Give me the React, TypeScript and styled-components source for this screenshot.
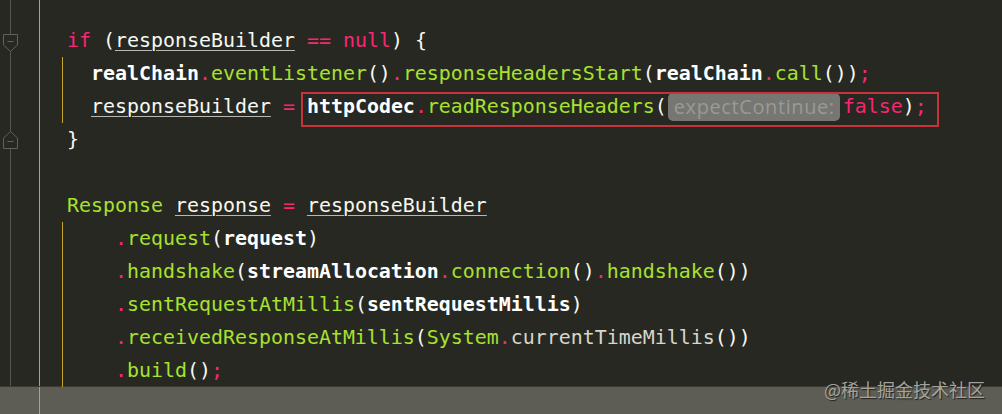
import React from 'react';
import styled, { createGlobalStyle } from 'styled-components';

const GlobalStyle = createGlobalStyle`
  html, body {
    margin: 0;
    padding: 0;
    background: #272822;
  }
`;

type Kind = 'plain' | 'kw' | 'op' | 'fn' | 'type' | 'var' | 'ul' | 'call';
type Token = [Kind, string];

const palette: Record<Kind, string> = {
  plain: '#f8f8f2',
  kw: '#f92672',
  op: '#f92672',
  fn: '#a6e22e',
  type: '#a6e22e',
  var: '#ffffff',
  ul: '#f8f8f2',
  call: '#d6d6cc',
};

const Screen = styled.div`
  position: relative;
  width: 1002px;
  height: 414px;
  overflow: hidden;
  display: flex;
  flex-direction: column;
  background: #272822;
`;

const Editor = styled.div`
  display: flex;
  height: 387px;
  border-bottom: 1px solid #3a3a33;
  box-sizing: border-box;
`;

const Gutter = styled.div`
  width: 39px;
  flex: none;
  padding-top: 24px;
  box-sizing: border-box;
  background: linear-gradient(to right, transparent 10px, #55554f 10px, #55554f 11px, transparent 11px);
`;

const GutterRow = styled.div<{ $offset: number }>`
  height: 33px;
  padding: ${(p) => p.$offset}px 0 0 3px;
  box-sizing: border-box;

  svg {
    display: block;
  }
`;

const Code = styled.div`
  flex: 1;
  border-left: 1px solid #c6a52c;
  padding: 24px 0 0 27px;
  font-family: 'DejaVu Sans Mono', 'Liberation Mono', monospace;
  font-size: 19.93px;
  white-space: pre;
`;

const Line = styled.div`
  height: 33px;
  line-height: 33px;
`;

const Block = styled.div`
  border-left: 1px solid #c6a52c;
  margin-left: -5px;
  padding-left: 4px;
`;

const Tok = styled.span<{ $kind: Kind }>`
  color: ${(p) => palette[p.$kind]};
  font-weight: ${(p) => (p.$kind === 'var' ? 700 : 400)};
  text-decoration: ${(p) => (p.$kind === 'ul' ? 'underline' : 'none')};
  text-decoration-color: #b8b8b0;
  text-decoration-thickness: 1px;
  text-underline-offset: 3px;
`;

const Highlight = styled.span`
  position: relative;
  display: inline-block;
  height: 33px;
  vertical-align: top;

  &::after {
    content: '';
    position: absolute;
    left: -6px;
    right: -12px;
    top: 2px;
    bottom: -4px;
    border: 2px solid #c8333b;
    pointer-events: none;
  }
`;

const Hint = styled.span`
  display: inline-block;
  vertical-align: top;
  margin: 3px 3px 0 1px;
  height: 28px;
  line-height: 28px;
  padding: 0 5px 0 6px;
  border-radius: 5px;
  background: #767672;
  color: #9a9a95;
  font-family: 'Open Sans', 'Noto Sans', sans-serif;
  font-size: 20px;
  letter-spacing: 0.6px;
`;

const StatusBar = styled.div`
  flex: 1;
  display: flex;
  padding-left: 39px;
  background: #5d5d55;
`;

const StatusRule = styled.div`
  flex: 1;
  border-left: 1px solid #c6a52c;
`;

const Watermark = styled.div`
  position: absolute;
  right: 17px;
  bottom: 14px;
  font-family: 'Noto Sans CJK SC', 'Noto Sans', sans-serif;
  font-size: 18px;
  line-height: 21px;
  color: #a3a39c;
  text-shadow: 1px 1px 1px rgba(20, 20, 16, 0.8);
`;

const FoldOpen = () => (
  <svg width="15" height="18" viewBox="0 0 15 18">
    <path d="M0.5 0.5 H14.5 V11 L7.5 17.5 L0.5 11 Z" fill="#272822" stroke="#62625c" />
    <path d="M4.5 7.5 H10.5" stroke="#62625c" />
  </svg>
);

const FoldClose = () => (
  <svg width="15" height="18" viewBox="0 0 15 18">
    <path d="M0.5 17.5 H14.5 V7 L7.5 0.5 L0.5 7 Z" fill="#272822" stroke="#62625c" />
    <path d="M4.5 10.5 H10.5" stroke="#62625c" />
  </svg>
);

const Tokens = ({ tokens }: { tokens: Token[] }) => (
  <>
    {tokens.map(([kind, text], index) => (
      <Tok key={index} $kind={kind}>{text}</Tok>
    ))}
  </>
);

const chain: Token[][] = [
  [['plain', '    '], ['op', '.'], ['fn', 'request'], ['plain', '('], ['var', 'request'], ['plain', ')']],
  [
    ['plain', '    '], ['op', '.'], ['fn', 'handshake'], ['plain', '('], ['var', 'streamAllocation'], ['op', '.'],
    ['fn', 'connection'], ['plain', '()'], ['op', '.'], ['fn', 'handshake'], ['plain', '())'],
  ],
  [['plain', '    '], ['op', '.'], ['fn', 'sentRequestAtMillis'], ['plain', '('], ['var', 'sentRequestMillis'], ['plain', ')']],
  [
    ['plain', '    '], ['op', '.'], ['fn', 'receivedResponseAtMillis'], ['plain', '('], ['type', 'System'], ['op', '.'],
    ['call', 'currentTimeMillis'], ['plain', '())'],
  ],
  [['plain', '    '], ['op', '.'], ['fn', 'build'], ['plain', '()'], ['op', ';']],
];

const App = () => {
  return (
    <Screen>
      <GlobalStyle />
      <Editor>
        <Gutter>
          <GutterRow $offset={10}><FoldOpen /></GutterRow>
          <GutterRow $offset={0} />
          <GutterRow $offset={0} />
          <GutterRow $offset={8}><FoldClose /></GutterRow>
        </Gutter>
        <Code>
          <Line>
            <Tokens tokens={[['kw', 'if'], ['plain', ' ('], ['ul', 'responseBuilder'], ['plain', ' '], ['op', '=='], ['plain', ' '], ['kw', 'null'], ['plain', ') {']]} />
          </Line>
          <Block>
            <Line>
              <Tokens
                tokens={[
                  ['plain', '  '], ['var', 'realChain'], ['op', '.'], ['fn', 'eventListener'], ['plain', '()'], ['op', '.'],
                  ['fn', 'responseHeadersStart'], ['plain', '('], ['var', 'realChain'], ['op', '.'], ['fn', 'call'],
                  ['plain', '())'], ['op', ';'],
                ]}
              />
            </Line>
            <Line>
              <Tokens tokens={[['plain', '  '], ['ul', 'responseBuilder'], ['plain', ' '], ['op', '='], ['plain', ' ']]} />
              <Highlight>
                <Tokens tokens={[['var', 'httpCodec'], ['op', '.'], ['fn', 'readResponseHeaders'], ['plain', '(']]} />
                <Hint>expectContinue:</Hint>
                <Tokens tokens={[['kw', 'false'], ['plain', ')'], ['op', ';']]} />
              </Highlight>
            </Line>
          </Block>
          <Line><Tokens tokens={[['plain', '}']]} /></Line>
          <Line />
          <Line>
            <Tokens tokens={[['type', 'Response'], ['plain', ' '], ['ul', 'response'], ['plain', ' '], ['op', '='], ['plain', ' '], ['ul', 'responseBuilder']]} />
          </Line>
          <Block>
            {chain.map((tokens, index) => (
              <Line key={index}><Tokens tokens={tokens} /></Line>
            ))}
          </Block>
        </Code>
      </Editor>
      <StatusBar>
        <StatusRule />
      </StatusBar>
      <Watermark>@稀土掘金技术社区</Watermark>
    </Screen>
  );
};

export default App;
